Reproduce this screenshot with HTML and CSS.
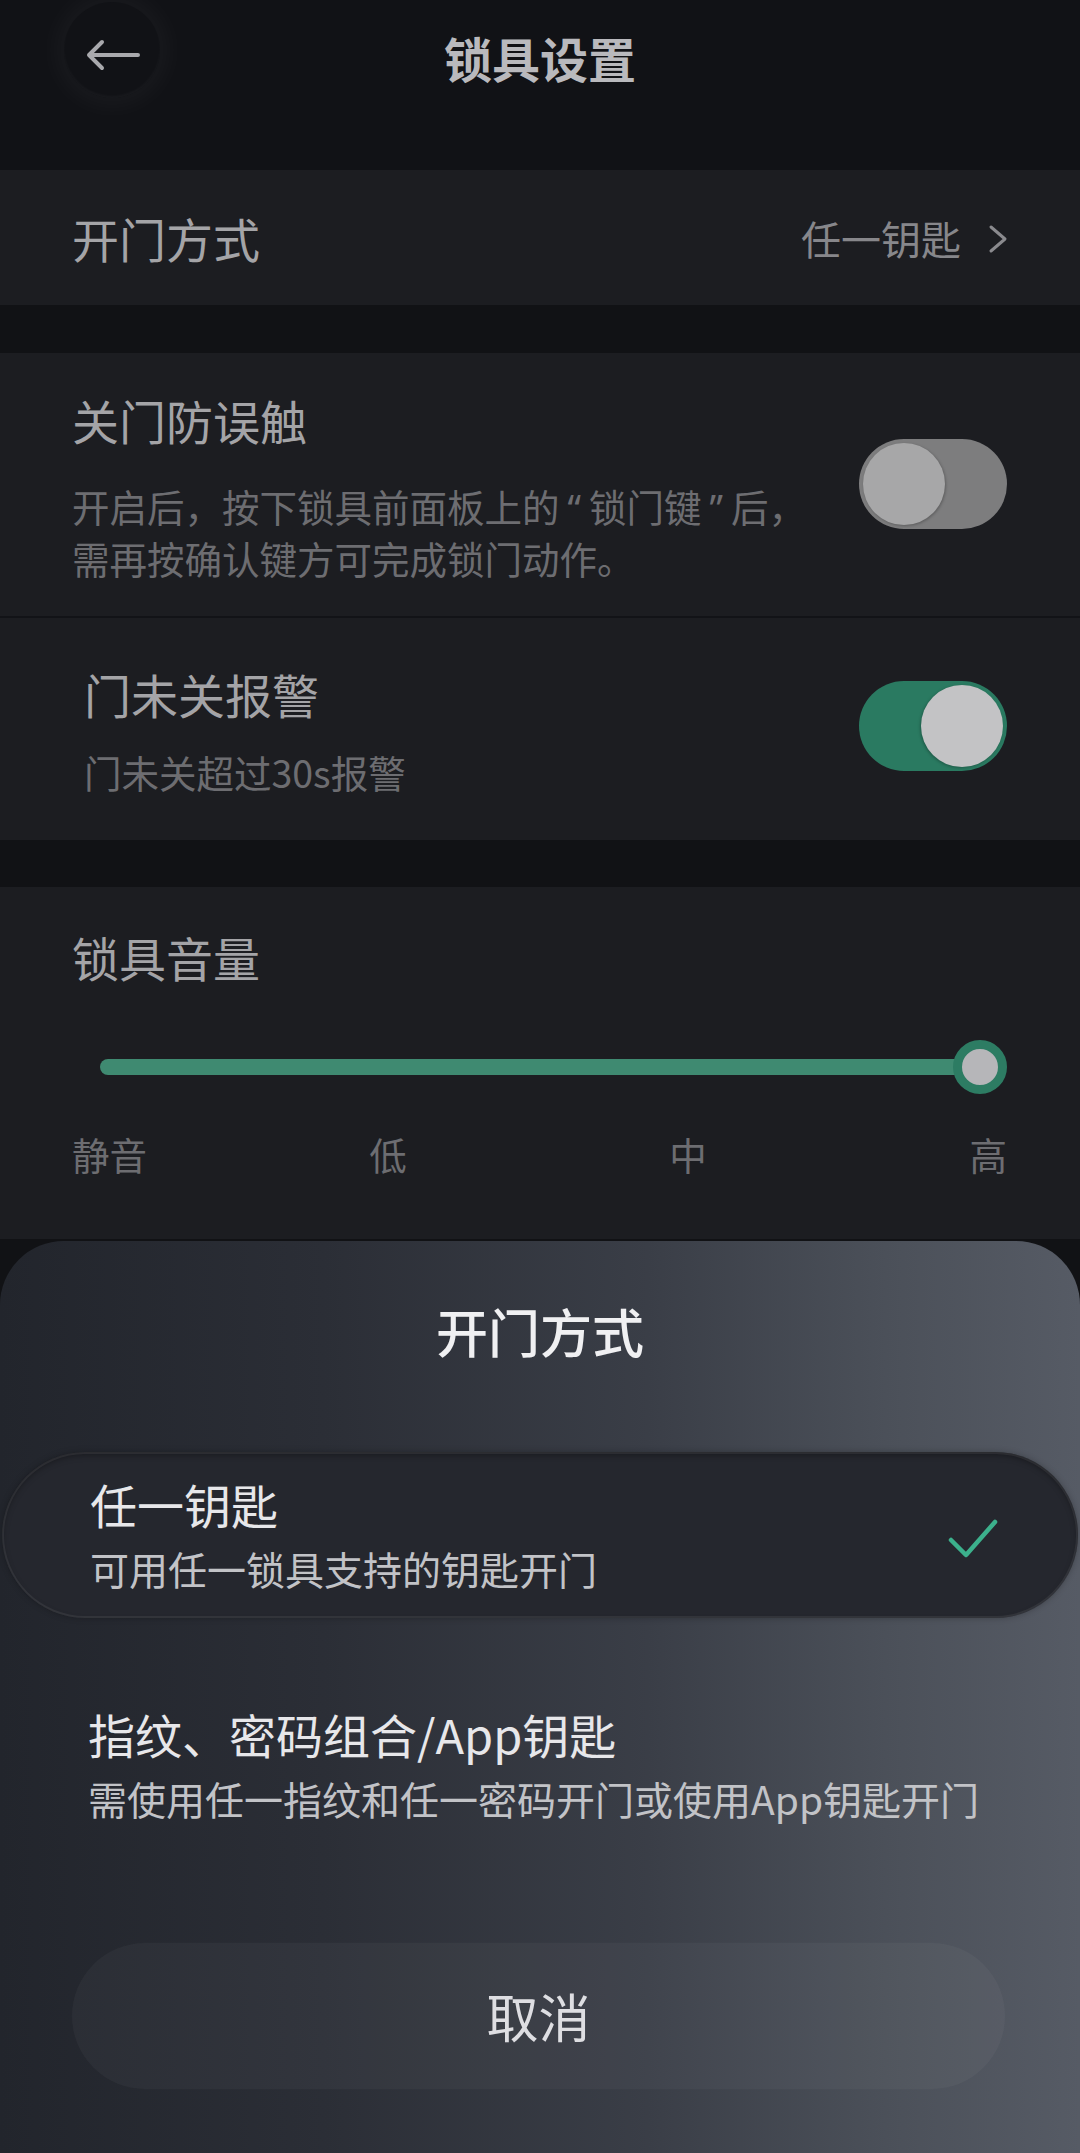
FILE: index.html
```html
<!DOCTYPE html>
<html lang="zh-CN">
<head>
<meta charset="utf-8">
<title>锁具设置</title>
<link rel="stylesheet" href="styles.css">
</head>
<body>
<div class="page">
  <header class="topbar">
    <div class="back">
      <svg width="96" height="96" viewBox="0 0 96 96"><path d="M25 53 H74 M38 40 L25 53 L38 66" fill="none" stroke="#a9a9ad" stroke-width="4" stroke-linecap="round" stroke-linejoin="round"/></svg>
    </div>
    <h1 class="title">锁具设置</h1>
    <div></div>
  </header>

  <section class="card card-open">
    <span class="row-title">开门方式</span>
    <span class="value">任一钥匙
      <svg class="chev" width="22" height="30" viewBox="0 0 22 30"><polyline points="4,3 18,15 4,27" fill="none" stroke="#8a8a8e" stroke-width="3" stroke-linecap="round" stroke-linejoin="round"/></svg>
    </span>
  </section>

  <section class="card card-switches">
    <div class="sw-row sw-row-1">
      <div class="sw-text">
        <div class="row-title">关门防误触</div>
        <div class="desc desc-1">开启后，按下锁具前面板上的<span class="q">“</span>锁门键<span class="q">”</span>后，<br>需再按确认键方可完成锁门动作。</div>
      </div>
      <div class="toggle off"><span class="knob"></span></div>
    </div>
    <div class="sw-row sw-row-2">
      <div class="sw-text">
        <div class="row-title">门未关报警</div>
        <div class="desc desc-2">门未关超过30s报警</div>
      </div>
      <div class="toggle on"><span class="knob"></span></div>
    </div>
  </section>

  <section class="card card-volume">
    <div class="row-title">锁具音量</div>
    <div class="slider">
      <div class="track"></div>
      <div class="thumb"></div>
    </div>
    <div class="levels">
      <span class="lv lv-start">静音</span>
      <span class="lv lv-mid">低</span>
      <span class="lv lv-mid">中</span>
      <span class="lv lv-end">高</span>
    </div>
  </section>

  <div class="sheet">
    <div class="sheet-title">开门方式</div>
    <div class="option selected">
      <div class="opt-text">
        <div class="opt-title">任一钥匙</div>
        <div class="opt-desc">可用任一锁具支持的钥匙开门</div>
      </div>
      <svg class="check" width="50" height="40" viewBox="0 0 50 40"><polyline points="3,22 18,37 47,4" fill="none" stroke="#3cb08c" stroke-width="4.5" stroke-linecap="round" stroke-linejoin="round"/></svg>
    </div>
    <div class="option option-2">
      <div class="opt-text">
        <div class="opt-title">指纹、密码组合/App钥匙</div>
        <div class="opt-desc">需使用任一指纹和任一密码开门或使用App钥匙开门</div>
      </div>
    </div>
    <div class="cancel">取消</div>
  </div>
</div>
</body>
</html>
```

FILE: styles.css
```css
* { box-sizing: border-box; }
html, body { margin: 0; padding: 0; }
body {
  width: 1080px;
  height: 2153px;
  overflow: hidden;
  background: #111215;
  font-family: "Noto Sans CJK SC", "Noto Sans", sans-serif;
}
.page {
  position: relative;
  width: 1080px;
  height: 2153px;
  background: #111215;
}
.topbar {
  height: 170px;
  display: grid;
  grid-template-columns: 1fr auto 1fr;
  align-items: start;
  background: #111216;
}
.back {
  width: 96px;
  height: 96px;
  margin: 2px 0 0 64px;
  border-radius: 50%;
  background: #111216;
  box-shadow: 0 0 26px 8px rgba(255,255,255,0.04), inset 0 -2px 3px rgba(255,255,255,0.035);
}
.back svg { display: block; }
.title {
  margin: 33px 0 0;
  font-size: 48px;
  line-height: 48px;
  font-weight: 700;
  color: #b9b9bd;
}
.card { background: #1c1d21; }
.card-open {
  height: 135px;
  padding: 0 71px 0 72px;
  display: flex;
  align-items: center;
  justify-content: space-between;
}
.row-title {
  font-size: 47px;
  line-height: 47px;
  color: #a4a4a7;
}
.value {
  display: flex;
  align-items: center;
  gap: 26px;
  font-size: 40px;
  line-height: 40px;
  color: #87878b;
}
.chev { display: block; margin-top: 2px; }
.card-switches { margin-top: 48px; }
.sw-row {
  display: flex;
  justify-content: space-between;
  align-items: flex-start;
  padding-right: 73px;
}
.sw-row-1 {
  height: 265px;
  padding-left: 72px;
  padding-top: 43px;
  border-bottom: 2px solid #121317;
}
.sw-row-2 {
  height: 222px;
  padding-left: 84px;
  padding-top: 52px;
}
.desc {
  font-size: 37.5px;
  color: #6d6d71;
}
.desc-1 { margin-top: 38px; line-height: 50px; }
.desc-2 { margin-top: 31px; line-height: 48px; }
.q { font-family: "Noto Sans", "DejaVu Sans", sans-serif; padding: 0 8px; }
.toggle {
  width: 148px;
  height: 90px;
  border-radius: 45px;
  padding: 4px;
  display: flex;
  align-self: center;
}
.sw-row-1 .toggle { margin-top: -45px; }
.sw-row-2 .toggle { margin-top: -58px; }
.toggle .knob {
  width: 82px;
  height: 82px;
  border-radius: 50%;
}
.toggle.off { background: #7d7d7e; justify-content: flex-start; }
.toggle.off .knob { background: #a7a7a8; box-shadow: 1px 1px 3px rgba(0,0,0,0.25); }
.toggle.on { background: #2a7a61; justify-content: flex-end; }
.toggle.on .knob { background: #c3c3c5; box-shadow: -1px 1px 3px rgba(0,0,0,0.25); }

.card-volume {
  margin-top: 47px;
  height: 352px;
  padding: 46px 73px 0 72px;
}
.slider {
  margin-top: 60px;
  height: 54px;
  display: flex;
  align-items: center;
}
.track {
  flex: 1;
  height: 16px;
  margin-left: 28px;
  border-radius: 8px;
  background: #3f8a71;
}
.thumb {
  width: 54px;
  height: 54px;
  margin-left: -27px;
  border-radius: 50%;
  background: #b6b6b9;
  border: 9px solid #2d7c63;
}
.levels {
  margin-top: 41px;
  display: grid;
  grid-template-columns: 166px 300px 300px 1fr;
  font-size: 37.5px;
  line-height: 38px;
  color: #6d6d71;
}
.lv-start { justify-self: start; }
.lv-mid { justify-self: center; }
.lv-end { justify-self: end; }

.sheet {
  position: absolute;
  left: 0;
  right: 0;
  top: 1241px;
  bottom: 0;
  border-radius: 64px 64px 0 0;
  background: linear-gradient(90deg, #22252c 0%, #2b2e36 30%, #3a3e47 60%, #4b5059 82%, #565b65 100%);
  padding-top: 64px;
}
.sheet-title {
  text-align: center;
  font-size: 52px;
  line-height: 52px;
  font-weight: 500;
  color: #f0f0f2;
}
.option {
  height: 166px;
  padding: 28px 80px 0 88px;
  display: flex;
  justify-content: space-between;
  align-items: flex-start;
}
.option.selected {
  margin: 95px 2px 0 2px;
  border-radius: 83px;
  background: #25272e;
  box-shadow: inset 0 0 0 2px rgba(255,255,255,0.07), inset 0 3px 6px rgba(0,0,0,0.35), 0 0 6px rgba(0,0,0,0.25);
}
.option-2 { margin-top: 64px; }
.opt-title {
  font-size: 47px;
  line-height: 47px;
  color: #e7e7ea;
}
.opt-desc {
  margin-top: 22px;
  font-size: 39px;
  line-height: 39px;
  color: #c2c3c7;
}
.check { display: block; align-self: center; margin-top: -22px; }
.cancel {
  margin: 95px 75px 0 72px;
  height: 146px;
  border-radius: 73px;
  background: rgba(255,255,255,0.035);
  box-shadow: 0 0 4px rgba(255,255,255,0.02);
  display: flex;
  align-items: center;
  justify-content: center;
  font-size: 52px;
  line-height: 52px;
  color: #dedee2;
}
```
